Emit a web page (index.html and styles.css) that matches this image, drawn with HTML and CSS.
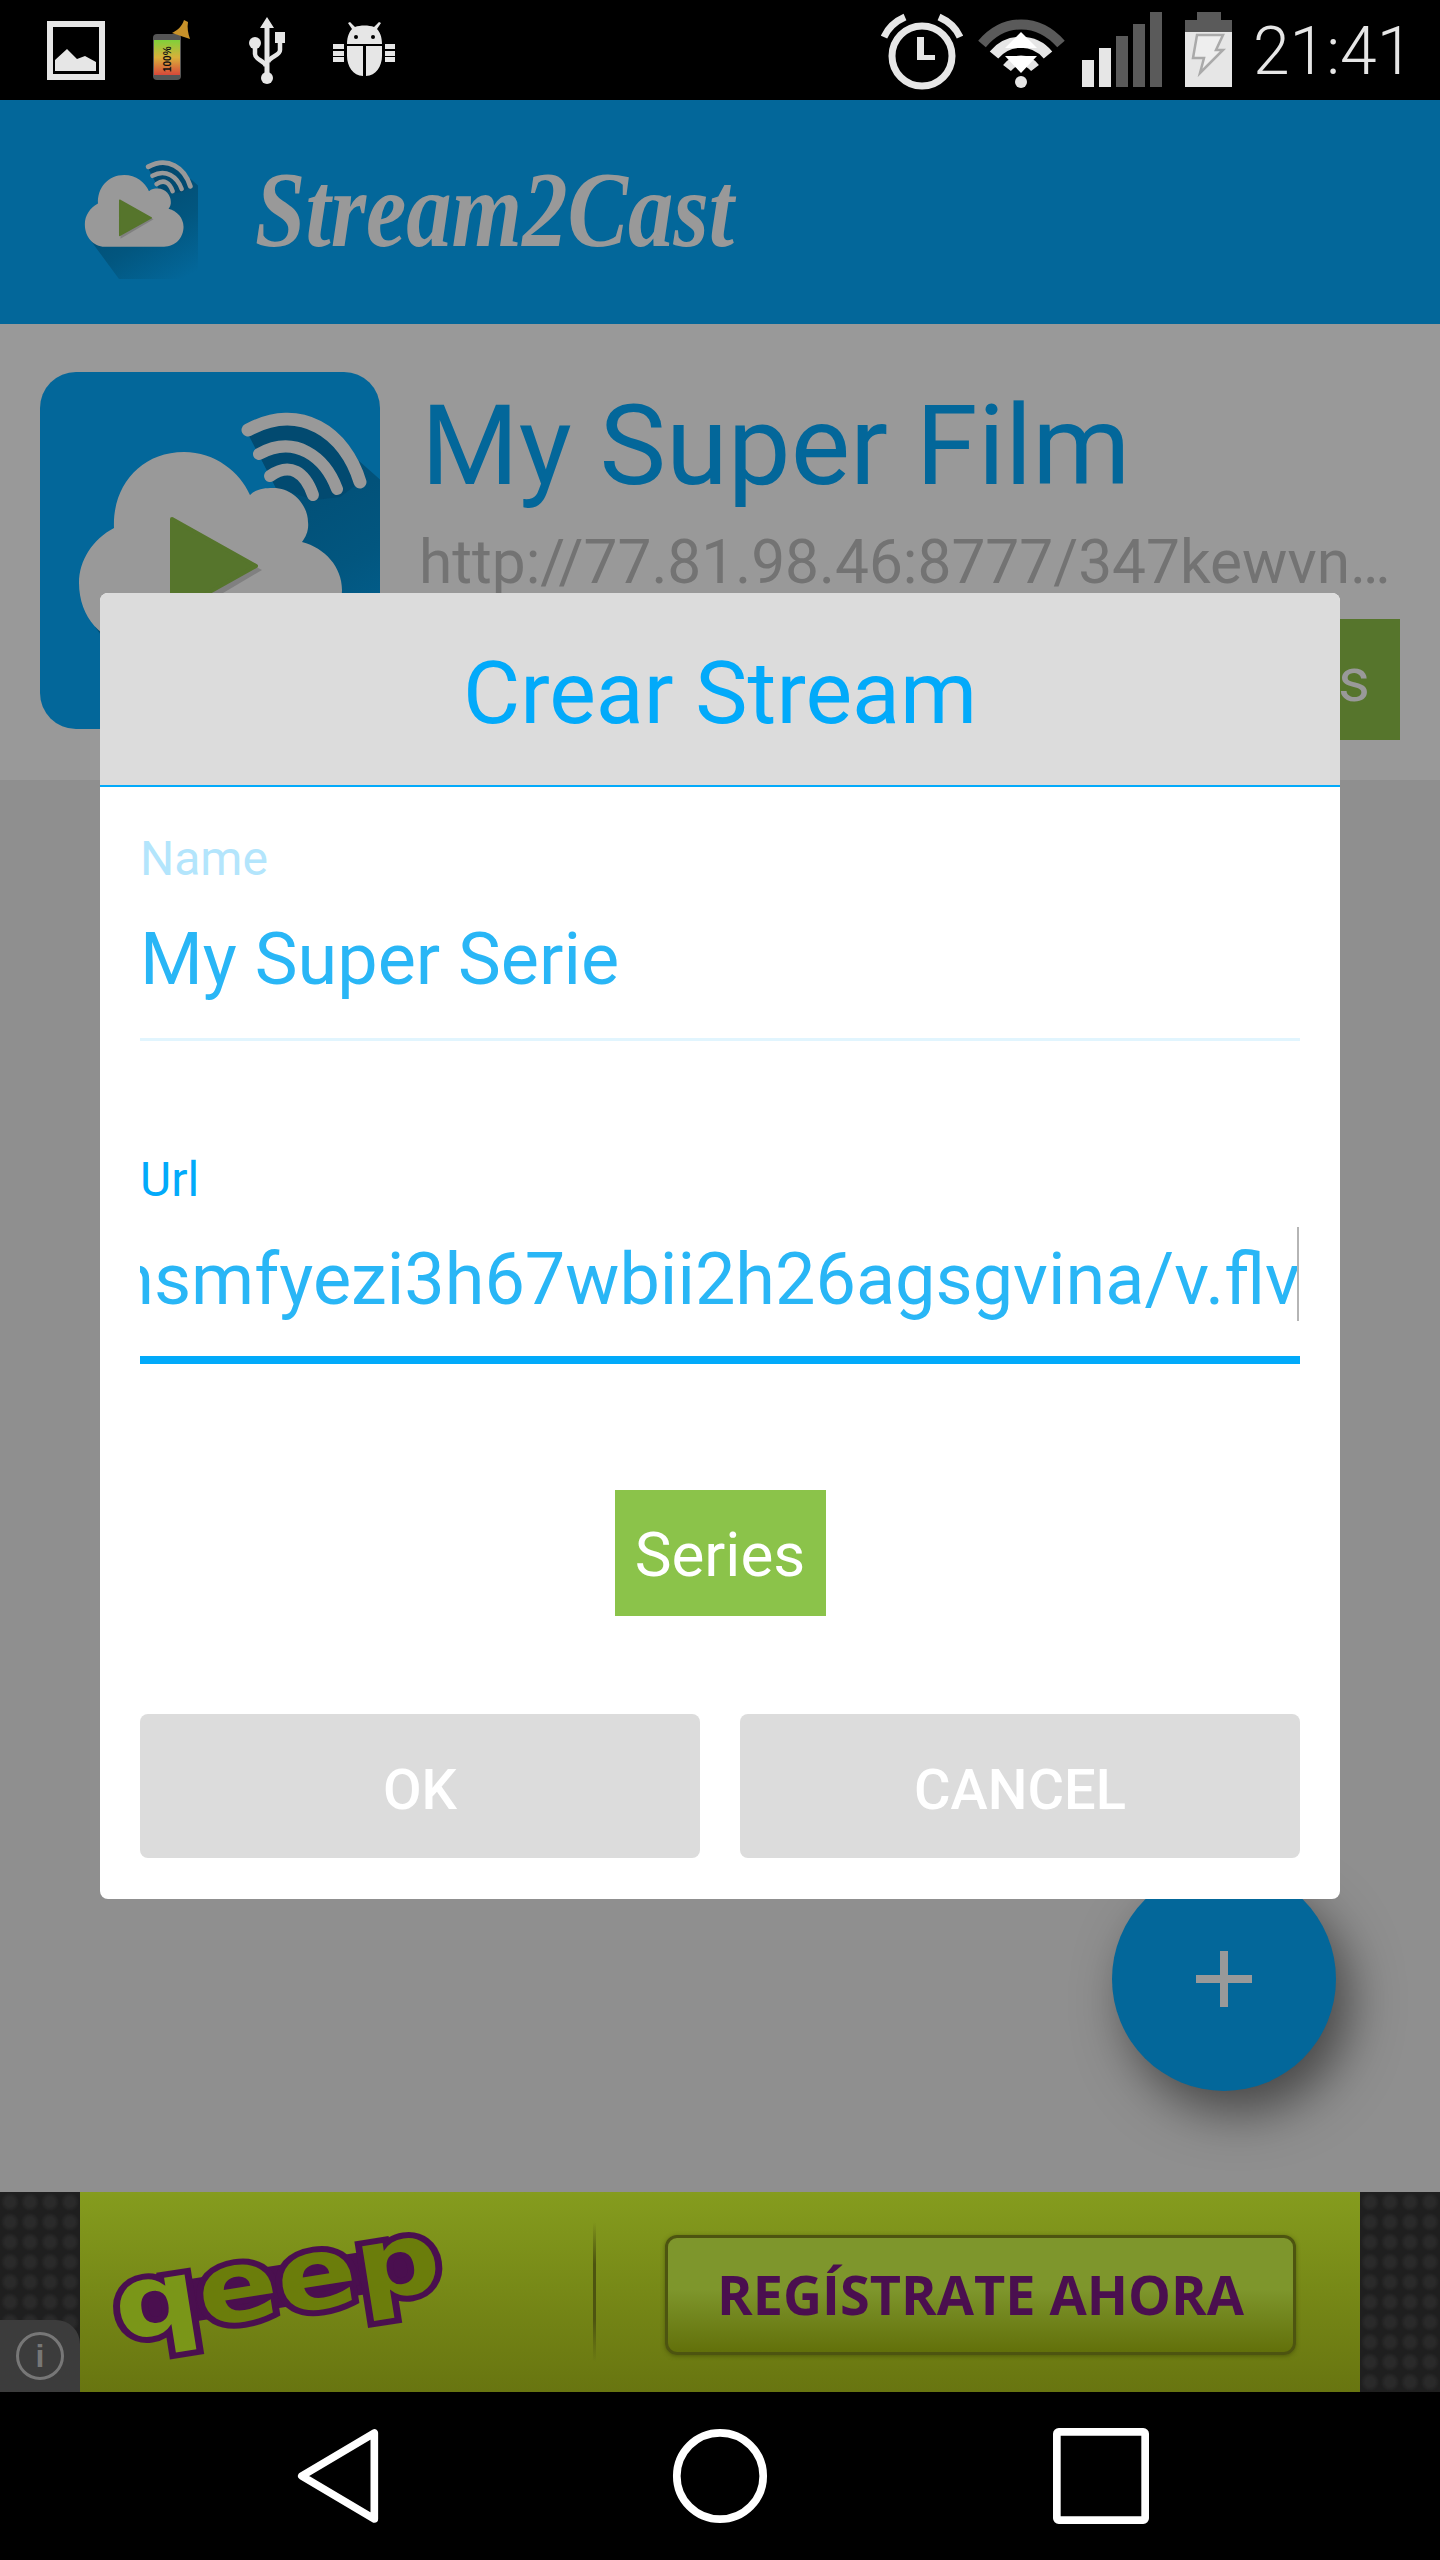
FILE: index.html
```html
<!DOCTYPE html>
<html lang="es">
<head>
<meta charset="utf-8">
<title>Stream2Cast</title>
<link rel="stylesheet" href="styles.css">
</head>
<body>
<svg class="defs" width="0" height="0" aria-hidden="true">
  <defs>
    <linearGradient id="fade" x1="0.35" y1="0.1" x2="0.85" y2="1">
      <stop offset="0" stop-color="#024a70"/>
      <stop offset="0.55" stop-color="#02567f"/>
      <stop offset="1" stop-color="#03679a"/>
    </linearGradient>
    <linearGradient id="batt" x1="0" y1="0" x2="0" y2="1">
      <stop offset="0" stop-color="#7fd13a"/>
      <stop offset="0.5" stop-color="#d9b03a"/>
      <stop offset="1" stop-color="#d8483a"/>
    </linearGradient>
    <symbol id="logo" viewBox="0 0 340 357">
      <path fill="url(#fade)" d="M208 60 C260 32 305 60 318 88 L345 112 L345 357 L130 357 L55 255 L200 108 L210 123 L236 116 Z"/>
      <path fill="#024a70" d="M208 62 C262 38 310 62 320 110 L300 125 L275 128 L236 116 Z"/>
      <path fill="#999" d="M74 156 C72 115 100 80 144 80 C175 80 200 100 210 123 C216 117 224 116 233 116 C255 116 268 135 268 150 C269 158 266 165 262 170 C285 176 302 195 302 218 C302 248 280 271 250 271 L92 271 C62 271 39 245 39 211 C39 188 53 167 74 156 Z"/>
      <path fill="none" stroke="#999" stroke-width="13" stroke-linecap="round" d="M208 58 C260 30 305 60 320 110"/>
      <path fill="none" stroke="#999" stroke-width="12" stroke-linecap="round" d="M219 82 C255 62 285 85 297 117"/>
      <path fill="none" stroke="#999" stroke-width="12" stroke-linecap="round" d="M230 104 C250 90 265 100 273 123"/>
      <path fill="#808080" d="M134 250 L222 198 L134 150 Z"/>
      <path fill="#56752c" stroke="#56752c" stroke-width="4" stroke-linejoin="round" d="M132 147 L216 194 L132 241 Z"/>
    </symbol>
  </defs>
</svg>

<div class="screen">
  <header class="status">
    <svg class="si w58" viewBox="47 0 58 100">
      <rect x="50" y="24" width="52" height="53" fill="none" stroke="#e6e6e6" stroke-width="6"/>
      <path fill="#e6e6e6" d="M55 71 V60 L67 49 L77 59 L85 56 L96 62 V71 Z"/>
    </svg>
    <svg class="si w37 gap48" viewBox="153 0 37 100">
      <rect x="153" y="34" width="28" height="46" rx="4" fill="#555"/>
      <rect x="154" y="40" width="26" height="35" fill="url(#batt)"/>
      <text class="batt-text" transform="translate(171 72) rotate(-90)">100%</text>
      <path fill="#c8922a" d="M172 33 C178 30 182 26 184 20 L188 22 C187 28 188 33 190 39 C184 37 178 35 172 33 Z"/>
    </svg>
    <svg class="si w37 gap58" viewBox="248 0 37 100">
      <path fill="#e6e6e6" d="M267 17 L274 28 H269.5 V78 H264.500 V28 H260 Z"/>
      <path fill="none" stroke="#e6e6e6" stroke-width="4.500" d="M255 45 V54 C255 60 264 60 266 66"/>
      <path fill="none" stroke="#e6e6e6" stroke-width="4.500" d="M280 42 V50 C280 56 270 56 268 62"/>
      <circle cx="255" cy="43" r="6" fill="#e6e6e6"/>
      <circle cx="267" cy="78" r="6" fill="#e6e6e6"/>
      <rect x="275" y="32" width="10" height="11" fill="#e6e6e6"/>
    </svg>
    <svg class="si w62 gap48" viewBox="333 0 62 100">
      <path fill="#e6e6e6" d="M347 44 C347 36 350 31 352 29 L348 23 L350 22 L355 27 C360 25 369 25 374 27 L379 22 L381 23 L377 29 C380 32 382 37 382 44 Z"/>
      <circle cx="356" cy="37" r="2" fill="#000"/>
      <circle cx="373" cy="37" r="2" fill="#000"/>
      <path fill="#e6e6e6" d="M347 46 H363 V76 C353 76 347 66 347 56 Z M366 46 H382 V56 C382 66 376 76 366 76 Z"/>
      <path fill="#e6e6e6" d="M333 44 H344 V49 H333 Z M333 51 H344 V56 H333 Z M333 57 H344 V62 H333 Z M385 44 H395 V49 H385 Z M385 51 H395 V56 H385 Z M385 57 H395 V62 H385 Z"/>
    </svg>

    <div class="status-right">
      <svg class="si w82" viewBox="881 0 82 100">
        <circle cx="922" cy="56" r="30" fill="none" stroke="#e6e6e6" stroke-width="7"/>
        <path fill="#e6e6e6" d="M917 37 H924 V55 H935 V60 H917 Z"/>
        <path fill="none" stroke="#e6e6e6" stroke-width="7" d="M884 37 C888 28 896 21 905 17 M960 37 C956 28 948 21 939 17"/>
      </svg>
      <svg class="si w88 gap15" viewBox="978 0 88 100">
        <path fill="none" stroke="#5a5a5a" stroke-width="10" d="M982 44 C1004 18 1038 18 1061 44"/>
        <path fill="none" stroke="#e6e6e6" stroke-width="11" d="M994 55 C1008 38 1034 38 1048 55"/>
        <path fill="none" stroke="#e6e6e6" stroke-width="10" d="M1007 68 C1015 58 1027 58 1035 68"/>
        <path fill="#fff" d="M1021 32 L1037 48 H1005 Z M1005 56 H1037 L1021 73 Z"/>
        <circle cx="1021" cy="82" r="6" fill="#e6e6e6"/>
      </svg>
      <div class="signal">
        <span class="bar on b1"></span>
        <span class="bar on b2"></span>
        <span class="bar b3"></span>
        <span class="bar b4"></span>
        <span class="bar b5"></span>
      </div>
      <svg class="si w47 gap23" viewBox="1185 0 47 100">
        <path fill="#5a5a5a" d="M1197 12 H1221 V20 H1232 V32 H1185 V20 H1197 Z"/>
        <rect x="1185" y="32" width="47" height="55" fill="#e6e6e6"/>
        <path fill="#eee" stroke="#aaa" stroke-width="2.500" d="M1197 35 H1223 L1216 50 H1223 L1200 73 L1204 58 H1193 Z"/>
      </svg>
      <span class="clock">21:41</span>
    </div>
  </header>

  <div class="appbar">
    <svg class="applogo"><use href="#logo"/></svg>
    <span class="brand">Stream2Cast</span>
  </div>

  <section class="stream">
    <div class="thumb"><svg class="thumb-logo"><use href="#logo"/></svg></div>
    <div class="stream-text">
      <h2 class="stream-name">My Super Film</h2>
      <p class="stream-url">http://77.81.98.46:8777/347kewvn…</p>
      <div class="tag-row"><span class="tag tag-dim">Series</span></div>
    </div>
  </section>

  <main class="list"></main>

  <aside class="ad">
    <div class="ad-side"><div class="ad-info"><span class="ad-i">i</span></div></div>
    <div class="ad-main">
      <div class="ad-logo-box"><span class="ad-logo"><span class="ad-logo-q">q</span>eep</span></div>
      <span class="ad-rule"></span>
      <div class="ad-cta">REGÍSTRATE AHORA</div>
    </div>
    <div class="ad-side"></div>
  </aside>

  <nav class="navbar">
    <svg class="nav-ic" viewBox="0 0 88 100"><path fill="none" stroke="#fff" stroke-width="8" stroke-linejoin="round" d="M5 50 L81 5 V95 Z"/></svg>
    <svg class="nav-ic" viewBox="0 0 100 100"><circle cx="50" cy="50" r="45" fill="none" stroke="#fff" stroke-width="8"/></svg>
    <svg class="nav-ic" viewBox="0 0 100 100"><rect x="4" y="4" width="92" height="92" rx="2" fill="none" stroke="#fff" stroke-width="8"/></svg>
  </nav>

  <button class="fab" type="button"><span class="plus"></span></button>

  <div class="dialog">
    <div class="dialog-head">Crear Stream</div>
    <div class="dialog-body">
      <div class="field field-idle">
        <label class="label label-idle">Name</label>
        <div class="value">My Super Serie</div>
      </div>
      <div class="field field-active">
        <label class="label">Url</label>
        <div class="value value-scroll"><span>http://77.81.98.46:8777/347kewvnsmfyezi3h67wbii2h26agsgvina/v.flv</span><i class="caret"></i></div>
      </div>
      <div class="tag-center"><span class="tag">Series</span></div>
      <div class="actions">
        <button class="btn" type="button">OK</button>
        <button class="btn" type="button">CANCEL</button>
      </div>
    </div>
  </div>
</div>
</body>
</html>
```

FILE: styles.css
```css
* { box-sizing: border-box; }
html, body { margin: 0; padding: 0; background: #000; }
body { font-family: Roboto, "Liberation Sans", sans-serif; }
.defs { position: absolute; }

.screen {
  position: relative;
  width: 1440px;
  height: 2560px;
  display: flex;
  flex-direction: column;
  overflow: hidden;
}

/* status bar */
.status {
  height: 100px;
  flex: none;
  background: #000;
  display: flex;
  padding-left: 47px;
}
.si { height: 100px; flex: none; display: block; }
.w58 { width: 58px; }
.w37 { width: 37px; }
.w62 { width: 62px; }
.w82 { width: 82px; }
.w88 { width: 88px; }
.w47 { width: 47px; }
.gap48 { margin-left: 48px; }
.gap58 { margin-left: 58px; }
.gap15 { margin-left: 15px; }
.gap23 { margin-left: 23px; }
.batt-text { font: bold 10px "Liberation Sans", sans-serif; fill: #111; }
.status-right { margin-left: auto; display: flex; padding-right: 40px; }
.signal { margin-left: 16px; width: 80px; height: 87px; display: flex; align-items: flex-end; gap: 5px; }
.bar { width: 12px; background: #5a5a5a; }
.bar.on { background: #e6e6e6; }
.b1 { height: 27px; }
.b2 { height: 39px; }
.b3 { height: 51px; }
.b4 { height: 63px; }
.b5 { height: 75px; }
.clock {
  margin-left: 21px;
  width: 147px;
  font-size: 66px;
  font-weight: 300;
  line-height: 104px;
  color: #e6e6e6;
  white-space: nowrap;
}

/* app bar */
.appbar {
  height: 224px;
  flex: none;
  background: #03679a;
  display: flex;
  align-items: flex-start;
  padding-left: 70px;
}
.applogo { width: 128px; height: 134px; margin-top: 45px; flex: none; }
.brand {
  margin-left: 57px;
  margin-top: 50px;
  font-family: "Liberation Serif", serif;
  font-style: italic;
  font-weight: 700;
  font-size: 108px;
  line-height: 120px;
  color: #999;
  white-space: nowrap;
  transform: scaleX(0.84);
  transform-origin: left center;
}

/* stream row */
.stream {
  height: 456px;
  flex: none;
  background: #999;
  display: flex;
  padding: 48px 40px 0;
}
.thumb {
  width: 340px;
  height: 357px;
  flex: none;
  border-radius: 36px;
  background: #03679a;
  overflow: hidden;
}
.thumb-logo { width: 340px; height: 357px; display: block; }
.stream-text { flex: 1; margin-left: 41px; padding-top: 8px; min-width: 0; }
.stream-name {
  margin: 0;
  font-size: 112px;
  font-weight: 400;
  line-height: 132px;
  color: #03679a;
  white-space: nowrap;
}
.stream-url {
  margin: 15px 0 0 -2px;
  font-size: 60.4px;
  line-height: 72px;
  color: #737373;
  white-space: nowrap;
}
.tag-row { display: flex; justify-content: flex-end; margin-top: 20px; }
.tag {
  width: 211px;
  height: 126px;
  background: #8bc34a;
  color: #fff;
  font-size: 62px;
  line-height: 130px;
  text-align: center;
}
.tag-dim { background: #56752c; color: #999; height: 121px; line-height: 121px; text-align: right; padding-right: 30px; }

.list { flex: 1; background: #8f8f8f; }

/* ad */
.ad { height: 200px; flex: none; display: flex; }
.ad-side {
  width: 80px;
  flex: none;
  position: relative;
  background-color: #1f1f1f;
  background-image: radial-gradient(circle, #2a2a2a 35%, transparent 65%);
  background-size: 20px 20px;
}
.ad-info {
  position: absolute;
  left: 0;
  bottom: 0;
  width: 80px;
  height: 72px;
  background: #3c3c3c;
  border-top-right-radius: 24px;
  display: flex;
  align-items: center;
  justify-content: center;
}
.ad-i {
  width: 48px;
  height: 48px;
  border: 3px solid #777;
  border-radius: 50%;
  color: #777;
  font: 700 32px/42px "Liberation Sans", sans-serif;
  text-align: center;
}
.ad-main {
  flex: 1;
  background: linear-gradient(#859c1e, #687510);
  display: flex;
  align-items: center;
}
.ad-logo-box { width: 513px; flex: none; display: flex; justify-content: flex-start; padding-left: 32px; }
.ad-logo {
  font-family: "DejaVu Sans", sans-serif;
  font-weight: 700;
  font-size: 118px;
  line-height: 120px;
  color: #6b7d0b;
  -webkit-text-stroke: 14px #4a0f4f;
  paint-order: stroke fill;
  display: block;
  background: linear-gradient(#4a0f4f, #4a0f4f) center 62% / 90% 42% no-repeat;
  transform: rotate(-9deg) scaleY(0.85);
  margin-top: -24px;
}
.ad-logo-q { color: #7a9618; }
.ad-rule {
  width: 3px;
  height: 140px;
  background: linear-gradient(transparent, #4d5410 30%, #4d5410 70%, transparent);
  flex: none;
}
.ad-cta {
  margin-left: 69px;
  margin-top: 5px;
  width: 631px;
  height: 120px;
  border: 3px solid #4d5410;
  border-radius: 12px;
  background: linear-gradient(#7e962c 45%, #62700a);
  box-shadow: 0 1px 4px rgba(60, 70, 0, 0.6);
  color: #4a0f4f;
  font-family: "Open Sans", sans-serif;
  font-weight: 700;
  font-size: 54px;
  line-height: 112px;
  text-align: center;
  white-space: nowrap;
}

/* nav */
.navbar { height: 168px; flex: none; background: #000; display: flex; align-items: center; padding-left: 297px; }
.nav-ic { height: 96px; width: 96px; flex: none; }
.nav-ic:nth-child(1) { width: 84px; }
.nav-ic:nth-child(2) { margin-left: 291px; }
.nav-ic:nth-child(3) { margin-left: 285px; }

/* floating button */
.fab {
  position: absolute;
  left: 1112px;
  top: 1867px;
  width: 224px;
  height: 224px;
  padding: 0;
  border: 0;
  border-radius: 50%;
  background: #03679a;
  box-shadow: 14px 22px 50px rgba(0, 0, 0, 0.5);
}
.plus { position: absolute; left: 84px; top: 84px; width: 56px; height: 56px;
  background:
    linear-gradient(#999, #999) center / 8px 56px no-repeat,
    linear-gradient(#999, #999) center / 56px 8px no-repeat;
}

/* dialog */
.dialog {
  position: absolute;
  left: 100px;
  top: 593px;
  width: 1240px;
  height: 1306px;
  background: #fff;
  border-radius: 8px;
  overflow: hidden;
  display: flex;
  flex-direction: column;
}
.dialog-head {
  height: 194px;
  flex: none;
  background: #dcdcdc;
  border-bottom: 2px solid #02aafa;
  color: #02aafa;
  font-size: 88px;
  line-height: 200px;
  text-align: center;
}
.dialog-body { flex: 1; padding: 0 40px; display: flex; flex-direction: column; }
.field-idle { height: 286px; padding-top: 45px; }
.label { display: block; height: 54px; font-size: 48px; line-height: 54px; color: #02aafa; }
.label-idle { color: #b3e5fc; }
.value {
  margin-top: 27px;
  height: 94px;
  font-size: 72px;
  line-height: 94px;
  color: #29b6f6;
  white-space: nowrap;
  overflow: hidden;
}
.field-idle::after {
  content: "";
  display: block;
  margin-top: 31px;
  height: 3px;
  background: #e1f5fe;
}
.field-active { padding-top: 80px; }
.field-active::after {
  content: "";
  display: block;
  margin-top: 29px;
  height: 8px;
  background: #02aafa;
}
.field-active .value { margin-top: 20px; height: 100px; padding-top: 6px; }
.value-scroll { display: flex; justify-content: flex-end; position: relative; }
.value-scroll span { flex: none; }
.caret { position: absolute; right: 1px; top: 0; width: 2px; height: 94px; background: #b5b5b5; }
.tag-center { display: flex; justify-content: center; margin-top: 126px; }
.actions { display: flex; gap: 40px; margin-top: 98px; }
.btn {
  flex: 1;
  height: 144px;
  border: 0;
  border-radius: 8px;
  background: #dcdcdc;
  color: #fff;
  font-family: Roboto, sans-serif;
  font-weight: 500;
  font-size: 56px;
  padding-top: 9px;
}
```
